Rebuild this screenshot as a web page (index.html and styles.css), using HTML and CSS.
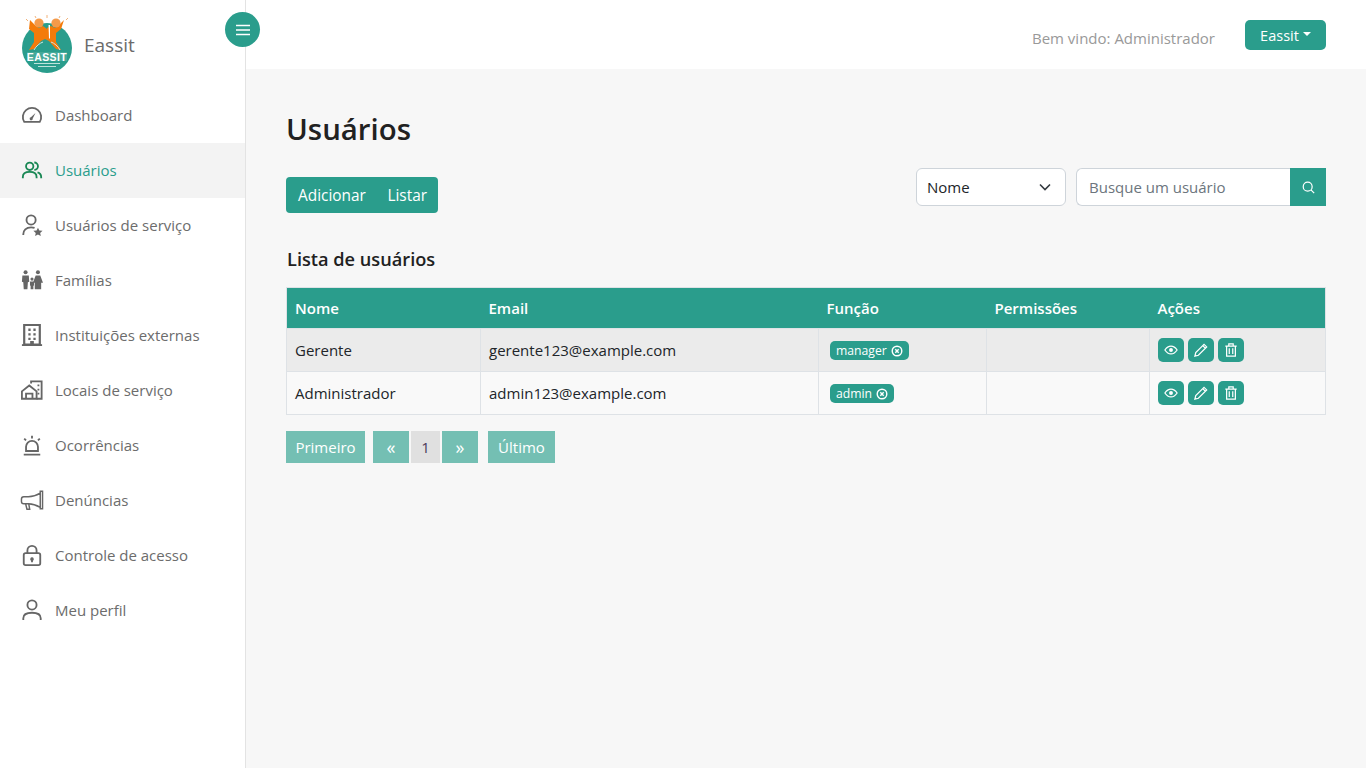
FILE: index.html
```html
<!DOCTYPE html>
<html lang="pt-BR">
<head>
    <meta charset="UTF-8">
    <meta name="viewport" content="width=device-width, initial-scale=1.0">
    <title>Eassit - Usuários</title>
    <link rel="stylesheet" href="styles.css">
</head>
<body>
    <aside class="sidebar">
        <div class="brand">
            <svg class="logo" width="58" height="62" viewBox="0 0 58 62">
                <circle cx="27" cy="36" r="25" fill="#2a9d8c"/>
                <path d="M10 8l6 6 3 2 4-2 4 3 0-1 4-2 4 2 3-2 6-6-3 9-5 4 0 9 5 8-5-1-7-8-4-2-4 2-7 8-5 1 5-8 0-9-5-4z" fill="#f47b0a"/>
                <circle cx="19" cy="11" r="4.600" fill="#f49a4a"/>
                <circle cx="36" cy="11" r="4.600" fill="#f49a4a"/>
                <path d="M28.500 13l1.500 0 0 13-1 1z" fill="#fff"/>
                <path d="M6 7l2 2M15 4l1 2M27 3v3M40 4l-1 2M48 6l-2 2" stroke="#f2b27a" stroke-width="1"/>
                <path d="M14 38c2-4 6-7 9-8M40 38c-2-4-6-7-9-8" fill="none" stroke="#cfe8e2" stroke-width="1"/>
                <rect x="7" y="40" width="40" height="9" fill="#45a999"/>
                <text x="27" y="48.500" text-anchor="middle" class="logo-text">EASSIT</text>
                <rect x="14" y="51" width="26" height="1" fill="#bfe3db"/>
                <rect x="18" y="54" width="18" height="1" fill="#bfe3db"/>
            </svg>
            <span class="brand-name">Eassit</span>
        </div>
        <nav class="menu">
            <a class="menu-item">
                <svg class="menu-icon" viewBox="0 0 24 24"><path d="M3.500 19.500a10 10 0 1 1 17 0z" class="ln"/><path d="M10.800 14.500l5-4.600-3 6a1.700 1.700 0 1 1-2-1.400z" class="fl"/></svg>
                Dashboard
            </a>
            <a class="menu-item active">
                <svg class="menu-icon" viewBox="0 0 24 24"><circle cx="9.500" cy="8" r="4" class="ln"/><path d="M2 21v-1.500c0-3.500 3-5.500 7.500-5.500s7.500 2 7.500 5.500V21" class="ln"/><path d="M14.500 3.800a4 4 0 0 1 0 8M18 14.500c2.600.8 4 2.600 4 5V21" class="ln"/></svg>
                Usuários
            </a>
            <a class="menu-item">
                <svg class="menu-icon" viewBox="0 0 24 24"><circle cx="11" cy="6.500" r="5" class="ln"/><path d="M2.500 23v-1c0-4 3-7.500 8.500-7.500 1.500 0 2.700.2 3.800.6" class="ln"/><path d="M18.500 15l1.500 3 3.500.4-2.600 2.300.7 3.300-3.100-1.700-3.100 1.700.7-3.300-2.600-2.300 3.500-.4z" class="fl"/></svg>
                Usuários de serviço
            </a>
            <a class="menu-item">
                <svg class="menu-icon" viewBox="0 0 24 24"><circle cx="5" cy="3.500" r="2.200" class="fl"/><circle cx="18.500" cy="3.500" r="2.200" class="fl"/><circle cx="12" cy="11" r="1.700" class="fl"/><path d="M1.500 7h7l.5 7-1.500.5-.5 7.500H3l-.5-7.500L1 14zM15 22v-7l-2 0 3-8h5l3 8-2 0v7zM9.800 13.500h4.400v4.500l-.7.300V22h-3v-3.700l-.7-.3z" class="fl"/></svg>
                Famílias
            </a>
            <a class="menu-item">
                <svg class="menu-icon" viewBox="0 0 24 24"><path d="M3.500 1h17v21.500h-17z" class="ln thick"/><path d="M1 23h22" class="ln"/><path d="M8 5h2.500v2.500H8zM13.500 5H16v2.500h-2.500zM8 10h2.500v2.500H8zM13.500 10H16v2.500h-2.500zM8 15h2.500v2.500H8zM13.500 15H16v2.500h-2.500zM10 18.500h4V22h-4z" class="fl"/></svg>
                Instituições externas
            </a>
            <a class="menu-item">
                <svg class="menu-icon" viewBox="0 0 24 24"><path d="M1 21.500v-8l8-6.500 8 6.500v8zM5.500 21.500v-5.500h7v5.500" class="ln"/><path d="M11 5V2.500h11.500v19H17" class="ln"/><path d="M18 6h2v2h-2zM18 10.500h2v2h-2zM18 15h2v2h-2z" class="fl"/></svg>
                Locais de serviço
            </a>
            <a class="menu-item">
                <svg class="menu-icon" viewBox="0 0 24 24"><path d="M5.500 18.500V14a6.500 6.500 0 0 1 13 0v4.500zM3 22.500h18" class="ln"/><path d="M12 2v3M3.500 5l2 2M20.500 5l-2 2" class="ln"/></svg>
                Ocorrências
            </a>
            <a class="menu-item">
                <svg class="menu-icon wide" viewBox="0 0 26 24"><path d="M22 4.500c-5 3-9 4-13 4H4c-1.500 0-2.500 1-2.500 2.500v2.500c0 1.500 1 2.500 2.500 2.500h5c4 0 8 1 13 4zM22 2.500h2.500v19H22zM6 16l1.500 6h3l-1-5.500" class="ln slim"/></svg>
                Denúncias
            </a>
            <a class="menu-item">
                <svg class="menu-icon" viewBox="0 0 24 24"><path d="M7 11V7a5 5 0 0 1 10 0v4" class="ln"/><path d="M5 10h14a2 2 0 0 1 2 2v9a2 2 0 0 1-2 2H5a2 2 0 0 1-2-2v-9a2 2 0 0 1 2-2z" class="ln"/><path d="M12 14.500a2 2 0 0 1 1 3.700V20h-2v-1.800a2 2 0 0 1 1-3.700z" class="fl"/></svg>
                Controle de acesso
            </a>
            <a class="menu-item">
                <svg class="menu-icon" viewBox="0 0 24 24"><circle cx="12" cy="6.500" r="5" class="ln"/><path d="M2.500 23v-2c0-3.500 3.500-6 9.500-6s9.500 2.500 9.500 6v2" class="ln"/></svg>
                Meu perfil
            </a>
        </nav>
    </aside>

    <button class="toggle" aria-label="Menu">
        <svg width="14" height="12" viewBox="0 0 14 12"><path d="M0 1.500h14M0 6h14M0 10.500h14" stroke="#fff" stroke-width="1.600"/></svg>
    </button>

    <div class="wrapper">
        <header class="topbar">
            <span class="welcome">Bem vindo: Administrador</span>
            <button class="user-btn">Eassit<span class="caret"></span></button>
        </header>

        <main class="content">
            <h1>Usuários</h1>

            <div class="toolbar">
                <div class="tabs">
                    <a>Adicionar</a>
                    <a>Listar</a>
                </div>
                <div class="filters">
                    <div class="select">
                        Nome
                        <svg width="12" height="8" viewBox="0 0 12 8"><path d="M1 1.500l5 5 5-5" fill="none" stroke="#343a40" stroke-width="1.600"/></svg>
                    </div>
                    <div class="search">
                        <span class="search-input">Busque um usuário</span>
                        <button class="search-btn" aria-label="Buscar">
                            <svg width="13" height="13" viewBox="0 0 16 16"><circle cx="7" cy="7" r="5.500" fill="none" stroke="#fff" stroke-width="1.500"/><path d="M11 11l4 4" stroke="#fff" stroke-width="1.500"/></svg>
                        </button>
                    </div>
                </div>
            </div>

            <h2>Lista de usuários</h2>

            <table class="users">
                <colgroup>
                    <col class="c-name"><col class="c-email"><col class="c-role"><col class="c-perm"><col>
                </colgroup>
                <thead>
                    <tr><th>Nome</th><th>Email</th><th>Função</th><th>Permissões</th><th>Ações</th></tr>
                </thead>
                <tbody>
                    <tr>
                        <td>Gerente</td>
                        <td>gerente123@example.com</td>
                        <td><span class="badge">manager <svg width="12" height="12" viewBox="0 0 12 12"><circle cx="6" cy="6" r="4.800" class="wl"/><path d="M4.300 4.300l3.400 3.400M7.700 4.300L4.300 7.700" class="wl"/></svg></span></td>
                        <td></td>
                        <td>
                            <div class="actions">
                                <button class="act"><svg width="14" height="14" viewBox="0 0 16 16"><path d="M1 8c2-3 4.300-4.500 7-4.500S13 5 15 8c-2 3-4.300 4.500-7 4.500S3 11 1 8z" class="wl"/><circle cx="8" cy="8" r="2.200" fill="#fff"/></svg></button>
                                <button class="act"><svg width="14" height="14" viewBox="0 0 16 16"><path d="M11.500 1.500l3 3-9.500 9.500-4 1 1-4zM10 3l3 3" class="wl"/></svg></button>
                                <button class="act"><svg width="14" height="14" viewBox="0 0 16 16"><path d="M1.500 3.500h13M5.500 3.500V1h5v2.500M3 3.500V15h10V3.500M6 6v6.500M10 6v6.500" class="wl"/></svg></button>
                            </div>
                        </td>
                    </tr>
                    <tr>
                        <td>Administrador</td>
                        <td>admin123@example.com</td>
                        <td><span class="badge">admin <svg width="12" height="12" viewBox="0 0 12 12"><circle cx="6" cy="6" r="4.800" class="wl"/><path d="M4.300 4.300l3.400 3.400M7.700 4.300L4.300 7.700" class="wl"/></svg></span></td>
                        <td></td>
                        <td>
                            <div class="actions">
                                <button class="act"><svg width="14" height="14" viewBox="0 0 16 16"><path d="M1 8c2-3 4.300-4.500 7-4.500S13 5 15 8c-2 3-4.300 4.500-7 4.500S3 11 1 8z" class="wl"/><circle cx="8" cy="8" r="2.200" fill="#fff"/></svg></button>
                                <button class="act"><svg width="14" height="14" viewBox="0 0 16 16"><path d="M11.500 1.500l3 3-9.500 9.500-4 1 1-4zM10 3l3 3" class="wl"/></svg></button>
                                <button class="act"><svg width="14" height="14" viewBox="0 0 16 16"><path d="M1.500 3.500h13M5.500 3.500V1h5v2.500M3 3.500V15h10V3.500M6 6v6.500M10 6v6.500" class="wl"/></svg></button>
                            </div>
                        </td>
                    </tr>
                </tbody>
            </table>

            <div class="pagination">
                <a class="page first">Primeiro</a>
                <a class="page arrow">«</a>
                <a class="page current">1</a>
                <a class="page arrow">»</a>
                <a class="page last">Último</a>
            </div>
        </main>
    </div>
</body>
</html>
```
FILE: styles.css
```css
* {
    box-sizing: border-box;
}

body {
    margin: 0;
    height: 768px;
    display: flex;
    overflow: hidden;
    font-family: "Open Sans", "Noto Sans", sans-serif;
    font-size: 15px;
    color: #212529;
    background-color: #f7f7f7;
}

button {
    border: none;
    padding: 0;
    font-family: inherit;
    cursor: pointer;
}

/* sidebar */
.sidebar {
    width: 246px;
    flex-shrink: 0;
    background-color: #fff;
    border-right: 1px solid #e3e3e3;
}

.brand {
    height: 88px;
    padding: 12px 0 0 20px;
    display: flex;
    align-items: flex-start;
}

.logo {
    flex-shrink: 0;
}

.logo-text {
    font-family: "Liberation Sans", sans-serif;
    font-size: 10.500px;
    font-weight: 700;
    letter-spacing: 0.4px;
    fill: #fff;
}

.brand-name {
    margin: 20px 0 0 6px;
    font-size: 19px;
    color: #6b6b6b;
}

.menu-item {
    height: 55px;
    padding: 0 0 2px 21px;
    display: flex;
    align-items: center;
    gap: 12px;
    color: #6c6c6c;
    text-decoration: none;
}

.menu-icon {
    width: 22px;
    height: 22px;
    flex-shrink: 0;
    color: #666;
}

.menu-icon.wide {
    width: 26px;
    margin-left: -2px;
    margin-right: -2px;
}

.ln {
    fill: none;
    stroke: currentColor;
    stroke-width: 2;
}

.ln.thick {
    stroke-width: 2.400;
}

.ln.slim {
    stroke-width: 1.600;
}

.fl {
    fill: currentColor;
}

.menu-item.active {
    background-color: #f3f3f3;
    color: #2a9d8c;
}

.menu-item.active .menu-icon {
    color: #198754;
}

.toggle {
    position: absolute;
    top: 12px;
    left: 225px;
    width: 35px;
    height: 35px;
    border-radius: 50%;
    background-color: #2a9d8c;
    display: flex;
    align-items: center;
    justify-content: center;
}

/* header */
.wrapper {
    flex: 1;
    min-width: 0;
}

.topbar {
    height: 69px;
    padding: 20px 40px 0 0;
    background-color: #fff;
    display: flex;
    justify-content: flex-end;
    align-items: flex-start;
    gap: 30px;
}

.welcome {
    margin-top: 8px;
    color: #999;
}

.user-btn {
    width: 81px;
    height: 30px;
    border-radius: 5px;
    background-color: #2a9d8c;
    color: #fff;
    font-size: 14.500px;
    display: flex;
    align-items: center;
    justify-content: center;
}

.caret {
    margin-left: 4px;
    margin-bottom: 3px;
    border-top: 4px solid #fff;
    border-left: 4px solid transparent;
    border-right: 4px solid transparent;
}

/* main */
.content {
    padding: 39px 40px 0;
}

h1 {
    margin: 0 0 18px 0;
    font-size: 29.400px;
    line-height: 42px;
    font-weight: 600;
    color: #212121;
}

.toolbar {
    height: 45px;
    display: flex;
    justify-content: space-between;
}

.tabs {
    align-self: flex-end;
    width: 152px;
    height: 36px;
    padding: 0 11px 0 12px;
    border-radius: 4px;
    background-color: #2a9d8c;
    color: #fff;
    font-size: 15.400px;
    display: flex;
    align-items: center;
    justify-content: space-between;
}

.filters {
    display: flex;
    gap: 10px;
    height: 38px;
}

.select {
    width: 150px;
    padding: 0 14px 0 10px;
    border: 1px solid #ced4da;
    border-radius: 6px;
    background-color: #fff;
    display: flex;
    align-items: center;
    justify-content: space-between;
}

.search {
    width: 250px;
    display: flex;
}

.search-input {
    flex: 1;
    padding-left: 12px;
    border: 1px solid #ced4da;
    border-right: none;
    border-radius: 6px 0 0 6px;
    background-color: #fff;
    color: #6c757d;
    display: flex;
    align-items: center;
}

.search-btn {
    width: 36px;
    background-color: #2a9d8c;
    display: flex;
    align-items: center;
    justify-content: center;
}

h2 {
    margin: 33px 0 14px 1px;
    font-size: 18.200px;
    line-height: 27px;
    font-weight: 600;
    color: #212121;
}

/* table */
.users {
    width: 100%;
    table-layout: fixed;
    border-collapse: collapse;
    border: 1px solid #dee2e6;
}

.c-name {
    width: 194px;
}

.c-email {
    width: 338px;
}

.c-role {
    width: 168px;
}

.c-perm {
    width: 163px;
}

.users th {
    height: 41px;
    padding: 0 8px;
    background-color: #2a9d8c;
    color: #fff;
    text-align: left;
    font-weight: 600;
}

.users td {
    height: 43px;
    padding: 0 8px;
    border: 1px solid #dee2e6;
}

.users tbody tr:nth-child(odd) {
    background-color: #ebebeb;
}

.users tbody tr:nth-child(even) {
    background-color: #f9f9f9;
}

.badge {
    margin-left: 3px;
    height: 19px;
    padding: 0 6px;
    border-radius: 5px;
    background-color: #2a9d8c;
    color: #fff;
    font-size: 12.200px;
    display: inline-flex;
    align-items: center;
    gap: 4px;
    vertical-align: 1px;
}

.wl {
    fill: none;
    stroke: #fff;
    stroke-width: 1.400;
}

.actions {
    display: flex;
    gap: 4px;
}

.act {
    width: 26px;
    height: 24px;
    border-radius: 5px;
    background-color: #2a9d8c;
    display: flex;
    align-items: center;
    justify-content: center;
}

/* pagination */
.pagination {
    margin-top: 16px;
    display: flex;
    height: 32px;
}

.page {
    height: 32px;
    background-color: #74bfb3;
    color: #fff;
    display: flex;
    align-items: center;
    justify-content: center;
}

.page.first {
    width: 79px;
    margin-right: 8px;
}

.page.arrow {
    width: 36px;
    font-size: 18px;
}

.page.current {
    width: 29px;
    margin: 0 2px;
    background-color: #e0e0e0;
    color: #4a3a5a;
}

.page.last {
    width: 67px;
    margin-left: 10px;
}
```
